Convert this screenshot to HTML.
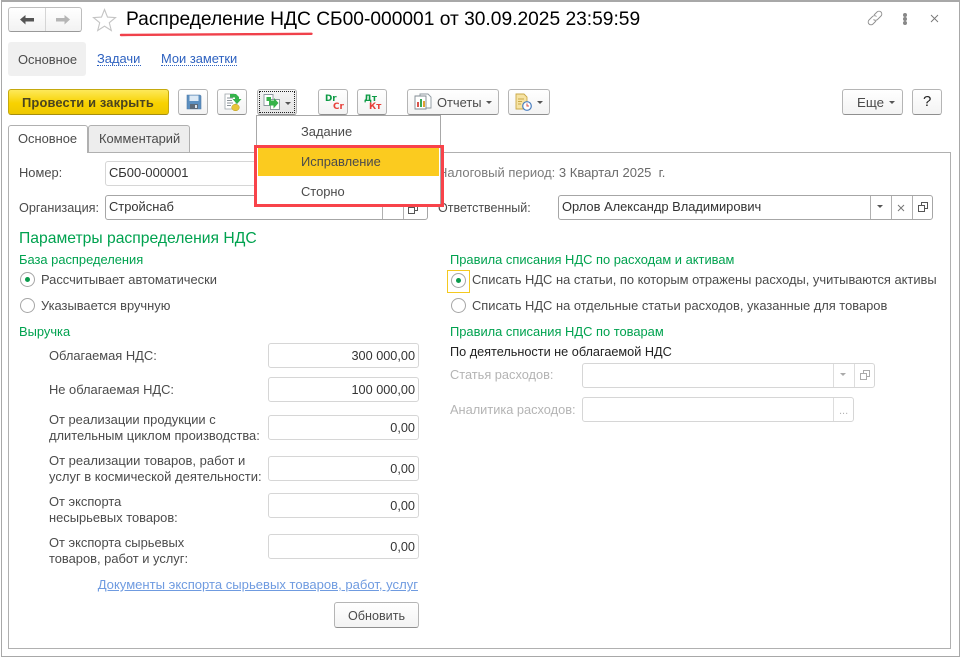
<!DOCTYPE html>
<html lang="ru"><head><meta charset="utf-8"><title>Распределение НДС</title>
<style>
html,body{margin:0;padding:0;background:#fff}
#p{position:relative;width:961px;height:658px;overflow:hidden;background:#fff;font-family:"Liberation Sans",Arial,sans-serif;font-size:12.9px;color:#4b4b4b}
#p div,#p svg,#p a{position:absolute;box-sizing:border-box}
.t{white-space:nowrap;line-height:16px}
.g{color:#00a24f}
.b{background:linear-gradient(#fff,#f3f3f3);border:1px solid #b5b5b5;border-bottom:1px solid #8f8f8f;border-radius:3px;height:26px;top:89px}
.i{background:#fff;border:1px solid #d6d6d6;border-radius:3px}
.d{border:1px solid #a6a6a6;border-radius:3px;background:#fff}
.v{white-space:nowrap;text-align:right;line-height:16px;color:#333;font-size:12.7px;right:3px;top:4px}
.r{width:15px;height:15px;border:1px solid #a6a6a6;border-radius:50%;background:#fff}
.r.on::after{content:"";position:absolute;left:4px;top:4px;width:5px;height:5px;border-radius:50%;background:#0a9a4c}
.s{width:1px;background:#b0b0b0;top:0;bottom:0}
.tri{width:0;height:0;border-left:3px solid transparent;border-right:3px solid transparent;border-top:3.5px solid #555}
.dis{color:#b4b4b4}
.dc{font-family:"DejaVu Sans",sans-serif;font-size:8.8px;font-weight:bold;line-height:10px;white-space:nowrap}
</style></head><body><div id="p">

<!-- outer frame -->
<div style="left:1px;top:0;width:959px;height:657px;border:1px solid #a8a8a8;border-width:2px 1px 1px 1px"></div>

<!-- nav -->
<div style="left:8px;top:7px;width:74px;height:25px;border:1px solid #bdbdbd;border-bottom-color:#999;border-radius:3px;background:linear-gradient(#fff,#f2f2f2)"></div>
<div style="left:45px;top:8px;width:1px;height:23px;background:#d5d5d5"></div>
<svg style="left:18px;top:13px" width="18" height="14" viewBox="0 0 18 14"><path d="M2 6.500l5.500-4.500v3H16v3.500H7.500v3z" fill="#555"/></svg>
<svg style="left:54px;top:13px" width="18" height="14" viewBox="0 0 18 14"><path d="M16 6.500l-5.500-4.500v3H2v3.500h8.500v3z" fill="#b5b5b5"/></svg>
<svg style="left:92px;top:8px" width="25" height="24" viewBox="0 0 25 24"><path d="M12.500 1.500l3 7.600 8 .5-6.200 5.100 2 7.800-6.800-4.300-6.800 4.300 2-7.800L1.500 9.600l8-.5z" fill="#fff" stroke="#c4c4c4" stroke-width="1.100"/></svg>
<div class="t" style="left:126px;top:8px;font-size:19.2px;line-height:24px;color:#000">Распределение НДС СБ00-000001 от 30.09.2025 23:59:59</div>
<svg style="left:118px;top:30px" width="198" height="8" viewBox="0 0 198 8"><path d="M3 5C60 4.500 130 4.300 193.500 3.800" stroke="#f0414b" stroke-width="2.400" fill="none" stroke-linecap="round"/></svg>

<!-- top right -->
<svg style="left:867px;top:10px" width="16" height="16" viewBox="0 0 16 16"><g fill="none" stroke="#8f8f8f" stroke-width=".9"><path d="M7 5l3-3a2.800 2.800 0 0 1 4 4l-3.500 3.500a2.800 2.800 0 0 1-4 0"/><path d="M9 11l-3 3a2.800 2.800 0 0 1-4-4l3.500-3.500a2.800 2.800 0 0 1 4 0"/></g></svg>
<div style="left:903px;top:13px;width:3.500px;height:3.500px;background:#888;border-radius:2px"></div>
<div style="left:903px;top:17px;width:3.500px;height:3.500px;background:#888;border-radius:2px"></div>
<div style="left:903px;top:21px;width:3.500px;height:3.500px;background:#888;border-radius:2px"></div>
<svg style="left:929px;top:13px" width="11" height="11" viewBox="0 0 11 11"><path d="M2 2l7 7M9 2l-7 7" stroke="#777" stroke-width=".9" fill="none"/></svg>

<!-- sections -->
<div style="left:8px;top:42px;width:78px;height:34px;background:#f0f0f0;border-radius:3px"></div>
<div class="t" style="left:18px;top:52px">Основное</div>
<div class="t" style="left:97px;top:51px;color:#2e62c0">Задачи</div>
<div style="left:97px;top:65px;width:44px;height:1px;border-top:1px dotted #2e62c0"></div>
<div class="t" style="left:161px;top:51px;color:#2e62c0">Мои заметки</div>
<div style="left:161px;top:65px;width:76px;height:1px;border-top:1px dotted #2e62c0"></div>

<!-- toolbar -->
<div style="left:8px;top:89px;width:161px;height:26px;background:linear-gradient(#fde95a,#f8d200 55%,#eec800);border:1px solid #c5a90e;border-bottom-color:#a58e10;border-radius:3px"></div>
<div class="t" style="left:22px;top:95px;font-weight:bold;color:#4a4420;letter-spacing:.15px">Провести и закрыть</div>

<div class="b" style="left:178px;width:30px"></div>
<svg style="left:186px;top:94px" width="16" height="16" viewBox="0 0 16 16"><path d="M1 1h13l1 1v13H1z" fill="#5b8fc0" stroke="#4f7ba6" stroke-width=".6"/><path d="M3.500 1.500h9v5.500h-9z" fill="#dce9f5"/><path d="M4 10h8v5H4z" fill="#5d6a78"/><path d="M9 11h2v3H9z" fill="#dfe6ee"/></svg>

<div class="b" style="left:217px;width:30px"></div>
<svg style="left:224px;top:92px" width="18" height="20" viewBox="0 0 18 20"><path d="M1 2h9l2 2v13H1z" fill="#fff" stroke="#9aa3a8" stroke-width=".8"/><path d="M3 6h6M3 8.500h5M3 11h6M3 13.500h4" stroke="#8a9298" stroke-width="1"/><ellipse cx="11.500" cy="15.500" rx="3.800" ry="3.300" fill="#e8c53a" stroke="#b89a20" stroke-width=".5"/><path d="M6 2h6l3 3v2h2.500l-4.500 5-4.500-5h2.500V5.500H6z" fill="#35b34a"/></svg>

<div class="b" style="left:257px;width:40px;background:linear-gradient(#f4f4f4,#e4e4e4)"></div>
<div style="left:259px;top:91px;width:36px;height:22px;border:1px dotted #222"></div>
<svg style="left:263px;top:93px" width="18" height="18" viewBox="0 0 18 18"><path d="M1 1.500h9v11H1z" fill="#fff" stroke="#8c979e" stroke-width=".9"/><path d="M7.500 6.500h9v10h-9z" fill="#fff" stroke="#8c979e" stroke-width=".9"/><path d="M3.500 4h4.500v3.500h3V5l4.500 5-5 5.500v-3H6V8H3.500z" fill="#36b34a"/></svg>
<div class="tri" style="left:285px;top:102px"></div>

<div class="b" style="left:318px;width:30px"></div>
<div class="dc" style="left:325px;top:94px;color:#0c9a44">Dr</div>
<div class="dc" style="left:333px;top:102px;color:#e8403a">Cr</div>
<div class="b" style="left:357px;width:30px"></div>
<div class="dc" style="left:364px;top:94px;color:#0c9a44">Дт</div>
<div class="dc" style="left:369px;top:102px;color:#e8403a">Кт</div>

<div class="b" style="left:407px;width:92px"></div>
<svg style="left:414px;top:93px" width="18" height="18" viewBox="0 0 18 18"><path d="M6 1h8l3 3v11H6z" fill="#fff" stroke="#8c979e" stroke-width=".9"/><path d="M1 3h11v13H1z" fill="#fff" stroke="#7f8a91" stroke-width=".9"/><path d="M3 9h2v5H3z" fill="#d9534a"/><path d="M6 6h2v8H6z" fill="#3aa856"/><path d="M9 8h2v6H9z" fill="#e0a030"/></svg>
<div class="t" style="left:437px;top:95px">Отчеты</div>
<div class="tri" style="left:486px;top:101px"></div>

<div class="b" style="left:508px;width:42px"></div>
<svg style="left:515px;top:92px" width="18" height="20" viewBox="0 0 18 20"><path d="M1 2h8l3 3v12H1z" fill="#f6e3a3" stroke="#c9a848" stroke-width=".9"/><path d="M3 7h6M3 9.500h4M3 12h3" stroke="#c9a848" stroke-width="1"/><circle cx="12" cy="14" r="4.300" fill="#fff" stroke="#4a7fc0" stroke-width="1.200"/><path d="M12 11.500V14h2" stroke="#d9534a" stroke-width="1" fill="none"/></svg>
<div class="tri" style="left:537px;top:101px"></div>

<div class="b" style="left:842px;width:61px"></div>
<div class="t" style="left:857px;top:95px;font-size:13.300px">Еще</div>
<div class="tri" style="left:889px;top:101px"></div>
<div class="b" style="left:912px;width:30px"></div>
<div class="t" style="left:923px;top:94px;font-size:15px;color:#222">?</div>

<!-- panel -->
<div style="left:8px;top:152px;width:943px;height:497px;border:1px solid #b0b0b0"></div>
<div style="left:8px;top:125px;width:80px;height:28px;background:#fff;border:1px solid #b0b0b0;border-bottom:0;border-radius:3px 3px 0 0"></div>
<div class="t" style="left:18px;top:131px">Основное</div>
<div style="left:88px;top:125px;width:102px;height:27px;background:#ededed;border:1px solid #b0b0b0;border-bottom:0;border-radius:3px 3px 0 0"></div>
<div class="t" style="left:99px;top:131px">Комментарий</div>

<!-- header fields -->
<div class="t" style="left:19px;top:165px">Номер:</div>
<div class="i" style="left:105px;top:161px;width:165px;height:25px"></div>
<div class="t" style="left:109px;top:165px;color:#333">СБ00-000001</div>
<div class="t" style="left:19px;top:200px;font-size:12.700px">Организация:</div>
<div class="d" style="left:105px;top:195px;width:323px;height:25px"><div class="s" style="left:276px"></div><div class="s" style="left:297px"></div></div>
<div class="t" style="left:109px;top:199px;color:#333">Стройснаб</div>
<svg style="left:408px;top:204px" width="10" height="10" viewBox="0 0 10 10"><path d="M3.500 3V.5h6v6H7M.5 3.500h6v6h-6z" fill="none" stroke="#555"/></svg>

<div class="t" style="left:438px;top:165px;color:#7b7b7b;font-size:13px">Налоговый период: <span style="color:#6a6a6a">3 Квартал 2025&nbsp; г.</span></div>
<div class="t" style="left:438px;top:200px;font-size:12.5px">Ответственный:</div>
<div class="d" style="left:558px;top:195px;width:375px;height:25px"><div class="s" style="left:311px"></div><div class="s" style="left:332px"></div><div class="s" style="left:353px"></div></div>
<div class="t" style="left:562px;top:199px;color:#333">Орлов Александр Владимирович</div>
<div class="tri" style="left:877px;top:205px"></div>
<svg style="left:897px;top:204px" width="8" height="8" viewBox="0 0 8 8"><path d="M1 1l6 6M7 1l-6 6" stroke="#777" fill="none"/></svg>
<svg style="left:918px;top:202px" width="10" height="10" viewBox="0 0 10 10"><path d="M3.500 3V.5h6v6H7M.5 3.500h6v6h-6z" fill="none" stroke="#555"/></svg>

<!-- popup -->
<div style="left:256px;top:115px;width:185px;height:91px;background:#fff;border:1px solid #a8a8a8"></div>
<div class="t" style="left:301px;top:124px">Задание</div>
<div style="left:258px;top:148px;width:181px;height:28px;background:#fbcb1f"></div>
<div class="t" style="left:301px;top:154px">Исправление</div>
<div class="t" style="left:301px;top:184px">Сторно</div>
<div style="left:254px;top:145px;width:190px;height:62px;border:3px solid #f8434a"></div>

<!-- left column -->
<div class="t g" style="left:19px;top:229px;font-size:15.700px;line-height:19px">Параметры распределения НДС</div>
<div class="t g" style="left:19px;top:252px">База распределения</div>
<div class="r on" style="left:20px;top:272px"></div>
<div class="t" style="left:41px;top:272px">Рассчитывает автоматически</div>
<div class="r" style="left:20px;top:298px"></div>
<div class="t" style="left:41px;top:298px">Указывается вручную</div>
<div class="t g" style="left:19px;top:324px">Выручка</div>

<div class="t" style="left:49px;top:348px">Облагаемая НДС:</div>
<div class="i" style="left:268px;top:343px;width:151px;height:25px"><div class="v">300 000,00</div></div>
<div class="t" style="left:49px;top:382px">Не облагаемая НДС:</div>
<div class="i" style="left:268px;top:377px;width:151px;height:25px"><div class="v">100 000,00</div></div>
<div class="t" style="left:49px;top:412px">От реализации продукции с<br>длительным циклом производства:</div>
<div class="i" style="left:268px;top:415px;width:151px;height:25px"><div class="v">0,00</div></div>
<div class="t" style="left:49px;top:453px;font-size:13px">От реализации товаров, работ и<br>услуг в космической деятельности:</div>
<div class="i" style="left:268px;top:456px;width:151px;height:25px"><div class="v">0,00</div></div>
<div class="t" style="left:49px;top:494px">От экспорта<br>несырьевых товаров:</div>
<div class="i" style="left:268px;top:493px;width:151px;height:25px"><div class="v">0,00</div></div>
<div class="t" style="left:49px;top:535px">От экспорта сырьевых<br>товаров, работ и услуг:</div>
<div class="i" style="left:268px;top:534px;width:151px;height:25px"><div class="v">0,00</div></div>
<div class="t" style="right:543px;top:577px;color:#6f9be0;text-decoration:underline;font-size:13.070px">Документы экспорта сырьевых товаров, работ, услуг</div>
<div class="b" style="left:334px;top:602px;width:85px"></div>
<div class="t" style="left:348px;top:608px;font-size:12.600px">Обновить</div>

<!-- right column -->
<div class="t g" style="left:450px;top:252px">Правила списания НДС по расходам и активам</div>
<div style="left:447px;top:270px;width:23px;height:23px;border:1px solid #f4c920"></div>
<div class="r on" style="left:451px;top:273px"></div>
<div class="t" style="left:472px;top:272px">Списать НДС на статьи, по которым отражены расходы, учитываются активы</div>
<div class="r" style="left:451px;top:298px"></div>
<div class="t" style="left:472px;top:298px">Списать НДС на отдельные статьи расходов, указанные для товаров</div>
<div class="t g" style="left:450px;top:324px">Правила списания НДС по товарам</div>
<div class="t" style="left:450px;top:344px;color:#222;font-size:12.700px">По деятельности не облагаемой НДС</div>
<div class="t dis" style="left:450px;top:367px;font-size:12.800px">Статья расходов:</div>
<div class="i" style="left:582px;top:363px;width:293px;height:25px"><div class="s" style="left:250px;background:#ddd"></div><div class="s" style="left:271px;background:#ddd"></div></div>
<div class="tri" style="left:840px;top:373px;border-top-color:#aaa"></div>
<svg style="left:860px;top:370px" width="10" height="10" viewBox="0 0 10 10"><path d="M3.500 3V.5h6v6H7M.5 3.500h6v6h-6z" fill="none" stroke="#aaa"/></svg>
<div class="t dis" style="left:450px;top:402px;font-size:12.800px">Аналитика расходов:</div>
<div class="i" style="left:582px;top:397px;width:272px;height:25px"><div class="s" style="left:250px;background:#ddd"></div></div>
<div class="t dis" style="left:839px;top:403px;font-size:11px">...</div>

</div></body></html>
